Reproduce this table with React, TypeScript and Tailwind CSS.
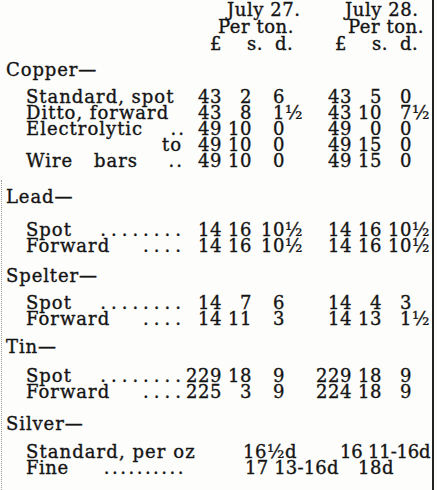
import * as React from "react";

type Price = [string, string, string, string?];
type Row = { label: React.ReactNode; a: Price; b: Price };
type Section = { title: string; mt: string; gap: string; rows: Row[] };

// word on the left, leader dots pushed to the right edge of the label column
function Lead({ word, dots, spread = "tracking-[5px]" }: { word: string; dots: string; spread?: string }) {
  return (
    <span className="flex justify-between w-[156px]">
      <span>{word}</span>
      <span className={`${spread} mr-[-4px]`}>{dots}</span>
    </span>
  );
}

const sections: Section[] = [
  {
    title: "Copper—",
    mt: "mt-[10px]",
    gap: "mt-[11px]",
    rows: [
      { label: "Standard, spot", a: ["43", "2", "6"], b: ["43", "5", "0"] },
      { label: "Ditto, forward", a: ["43", "8", "1", "½"], b: ["43", "10", "7", "½"] },
      { label: <Lead word="Electrolytic" dots=".." spread="tracking-[2px]" />, a: ["49", "10", "0"], b: ["49", "0", "0"] },
      { label: <span className="block text-right w-[156px]">to</span>, a: ["49", "10", "0"], b: ["49", "15", "0"] },
      {
        label: (
          <span className="flex w-[156px]">
            <span className="w-[68px]">Wire</span>
            <span>bars</span>
            <span className="ml-auto tracking-[2px] mr-[-2px]">..</span>
          </span>
        ),
        a: ["49", "10", "0"],
        b: ["49", "15", "0"],
      },
    ],
  },
  {
    title: "Lead—",
    mt: "mt-[20px]",
    gap: "mt-[17px]",
    rows: [
      { label: <Lead word="Spot" dots="........" />, a: ["14", "16", "10", "½"], b: ["14", "16", "10", "½"] },
      { label: <Lead word="Forward" dots="...." />, a: ["14", "16", "10", "½"], b: ["14", "16", "10", "½"] },
    ],
  },
  {
    title: "Spelter—",
    mt: "mt-[14px]",
    gap: "mt-[11px]",
    rows: [
      { label: <Lead word="Spot" dots="........" />, a: ["14", "7", "6"], b: ["14", "4", "3"] },
      { label: <Lead word="Forward" dots="...." />, a: ["14", "11", "3"], b: ["14", "13", "1", "½"] },
    ],
  },
  {
    title: "Tin—",
    mt: "mt-[12px]",
    gap: "mt-[13px]",
    rows: [
      { label: <Lead word="Spot" dots="........" />, a: ["229", "18", "9"], b: ["229", "18", "9"] },
      { label: <Lead word="Forward" dots="...." />, a: ["225", "3", "9"], b: ["224", "18", "9"] },
    ],
  },
];

function Cells({ p, first }: { p: Price; first: boolean }) {
  return (
    <>
      <span className={`${first ? "w-[38px]" : "w-[52px]"} text-right`}>{p[0]}</span>
      <span className="w-[30px] text-right">{p[1]}</span>
      <span className={`${first ? "w-[33px]" : "w-[30px]"} text-right`}>{p[2]}</span>
      <span className={`${first ? "w-[15px]" : "w-[20px]"} text-left`}>{p[3] ?? ""}</span>
    </>
  );
}

export default function App() {
  return (
    <div
      className="relative w-[437px] h-[490px] overflow-hidden bg-[#fdfdfb] text-[#141414] text-[18px] leading-[16px] tracking-[0.03em] [-webkit-text-stroke:0.35px_#141414]"
      style={{ fontFamily: '"DejaVu Serif", "Liberation Serif", serif' }}
    >
      <div className="absolute right-[3px] top-0 bottom-0 w-[2px] bg-[#222]" />
      <div className="absolute left-[1px] top-[180px] bottom-0 border-l border-dotted border-[#999]" />

      <div className="pt-[2px] whitespace-pre">
        <div className="flex">
          <span className="w-[227px]" />
          <span className="w-[118px]">July 27.</span>
          <span>July 28.</span>
        </div>
        <div className="flex mt-[1px]">
          <span className="w-[218px]" />
          <span className="w-[130px]">Per ton.</span>
          <span>Per ton.</span>
        </div>
        <div className="flex mt-[1px]">
          <span className="w-[210px]" />
          <span className="w-[37px]">£</span>
          <span className="w-[28px]">s.</span>
          <span className="w-[60px]">d.</span>
          <span className="w-[37px]">£</span>
          <span className="w-[28px]">s.</span>
          <span>d.</span>
        </div>

        {sections.map((s) => (
          <div key={s.title} className={s.mt}>
            <div className="pl-[6px] tracking-[0.05em]">{s.title}</div>
            <div className={s.gap}>
              {s.rows.map((r, j) => (
                <div key={j} className="flex">
                  <span className="w-[184px] pl-[26px] tracking-[0.055em]">{r.label}</span>
                  <Cells p={r.a} first />
                  <Cells p={r.b} first={false} />
                </div>
              ))}
            </div>
          </div>
        ))}

        <div className="mt-[16px]">
          <div className="pl-[6px] tracking-[0.05em]">Silver—</div>
          <div className="mt-[12px]">
            <div className="flex">
              <span className="w-[243px] pl-[26px] tracking-[0.06em]">Standard, per oz</span>
              <span className="w-[97px]">16½d</span>
              <span className="tracking-[-0.01em]">16 11-16d</span>
            </div>
            <div className="flex">
              <span className="w-[245px] pl-[26px]">
                <Lead word="Fine" dots=".........." spread="tracking-[2.5px]" />
              </span>
              <span className="w-[113px] tracking-[0.01em]">17 13-16d</span>
              <span>18d</span>
            </div>
          </div>
        </div>
      </div>
    </div>
  );
}
